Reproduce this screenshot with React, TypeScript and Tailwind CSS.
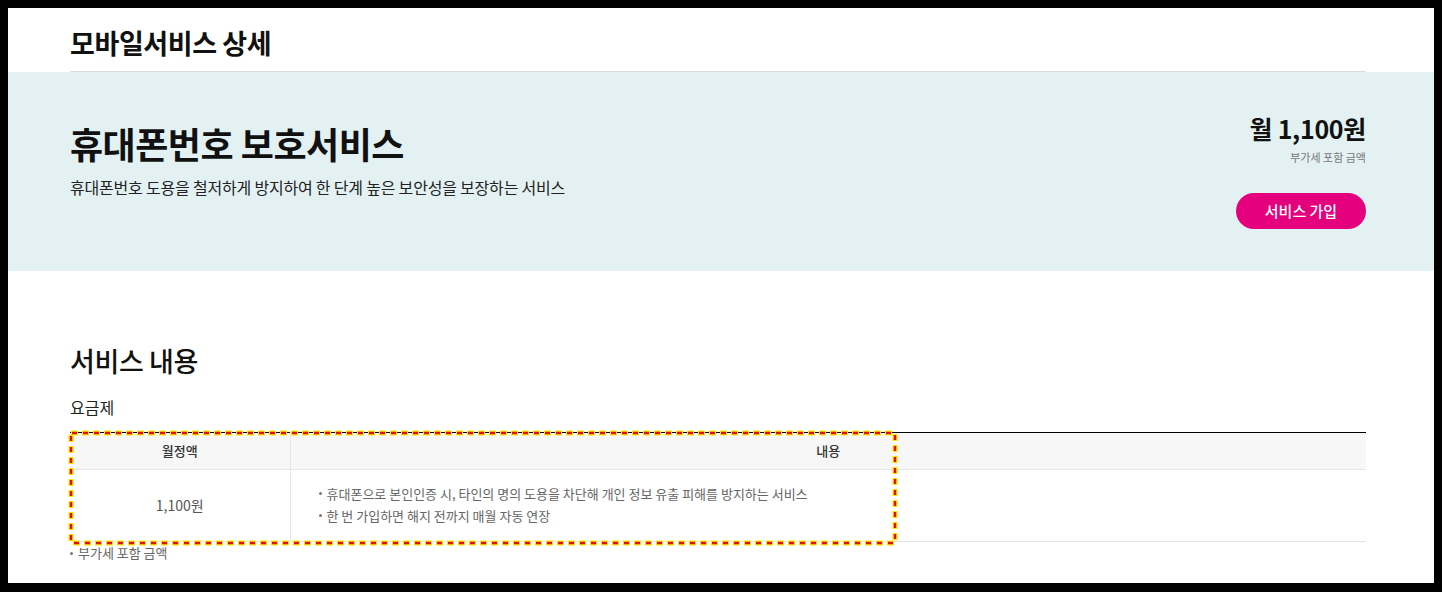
const font = { fontFamily: '"Noto Sans CJK KR", "Noto Sans", sans-serif' };

function HighlightBox() {
  return (
    <svg
      className="absolute left-[-2px] top-[-2px] pointer-events-none"
      width={830}
      height={116}
    >
      <rect x={3} y={3} width={824} height={110} fill="none" stroke="#ffe600" strokeWidth={5} strokeDasharray="7 4" />
      <rect x={3} y={3} width={824} height={110} fill="none" stroke="#e01010" strokeWidth={2.5} strokeDasharray="5 6" strokeDashoffset={-1} />
    </svg>
  );
}

export default function App() {
  return (
    <div className="h-[592px] bg-black pt-[8px] px-[8px] pb-[9px]" style={font}>
      <div className="h-full bg-white overflow-hidden">
        {/* page title */}
        <div className="ml-[62px] w-[1296px] h-[64px] border-b border-[#dcdcdc] flex items-end pb-[15px]">
          <h1 className="text-[27px] font-bold leading-none text-[#111] tracking-[-0.4px]">모바일서비스 상세</h1>
        </div>

        {/* service summary band */}
        <div className="bg-[#e3f1f3] h-[199px]">
          <div className="ml-[62px] w-[1296px] flex justify-between">
            <div className="pt-[47px]">
              <h2 className="text-[36px] font-bold leading-[48px] text-[#111] tracking-[-0.5px]">휴대폰번호 보호서비스</h2>
              <p className="mt-[8px] text-[16px] leading-[24px] text-[#222] tracking-[-0.2px]">
                휴대폰번호 도용을 철저하게 방지하여 한 단계 높은 보안성을 보장하는 서비스
              </p>
            </div>
            <div className="pt-[38px] flex flex-col items-end">
              <div className="text-[25px] font-bold leading-[36px] text-[#111] tracking-[-0.3px]">월 1,100원</div>
              <div className="mt-[3px] text-[11px] leading-[16px] text-[#777]">부가세 포함 금액</div>
              <button className="mt-[28px] w-[130px] h-[36px] rounded-full bg-[#e5007d] text-white text-[15px] font-medium">
                서비스 가입
              </button>
            </div>
          </div>
        </div>

        {/* service content */}
        <div className="ml-[62px] w-[1296px] pt-[70px]">
          <h3 className="text-[27px] font-medium leading-[40px] text-[#111] tracking-[-0.4px]">서비스 내용</h3>
          <div className="mt-[14px] text-[16px] leading-[24px] text-[#222]">요금제</div>
          <div className="relative mt-[13px]">
            <table className="w-full border-t border-black border-collapse">
              <thead>
                <tr className="bg-[#f7f7f7] h-[37px] border-b border-[#e5e5e5]">
                  <th className="w-[220px] border-r border-[#e5e5e5] text-[13px] font-medium text-[#333]">월정액</th>
                  <th className="text-[13px] font-medium text-[#333]">내용</th>
                </tr>
              </thead>
              <tbody>
                <tr className="h-[72px] border-b border-[#e5e5e5]">
                  <td className="border-r border-[#e5e5e5] text-center text-[14px] text-[#555]">1,100원</td>
                  <td className="pl-[28px] pb-[2px] text-[13px] leading-[22px] text-[#666]">
                    <ul>
                      <li className="flex items-center gap-[5px]">
                        <span className="w-[3px] h-[3px] rounded-full bg-[#777] inline-block" />
                        휴대폰으로 본인인증 시, 타인의 명의 도용을 차단해 개인 정보 유출 피해를 방지하는 서비스
                      </li>
                      <li className="flex items-center gap-[5px]">
                        <span className="w-[3px] h-[3px] rounded-full bg-[#777] inline-block" />
                        한 번 가입하면 해지 전까지 매월 자동 연장
                      </li>
                    </ul>
                  </td>
                </tr>
              </tbody>
            </table>
            <HighlightBox />
          </div>
          <div className="mt-[1px] flex items-center gap-[5px] text-[13px] leading-[20px] text-[#666]">
            <span className="w-[3px] h-[3px] rounded-full bg-[#777] inline-block" />
            부가세 포함 금액
          </div>
        </div>
      </div>
    </div>
  );
}
